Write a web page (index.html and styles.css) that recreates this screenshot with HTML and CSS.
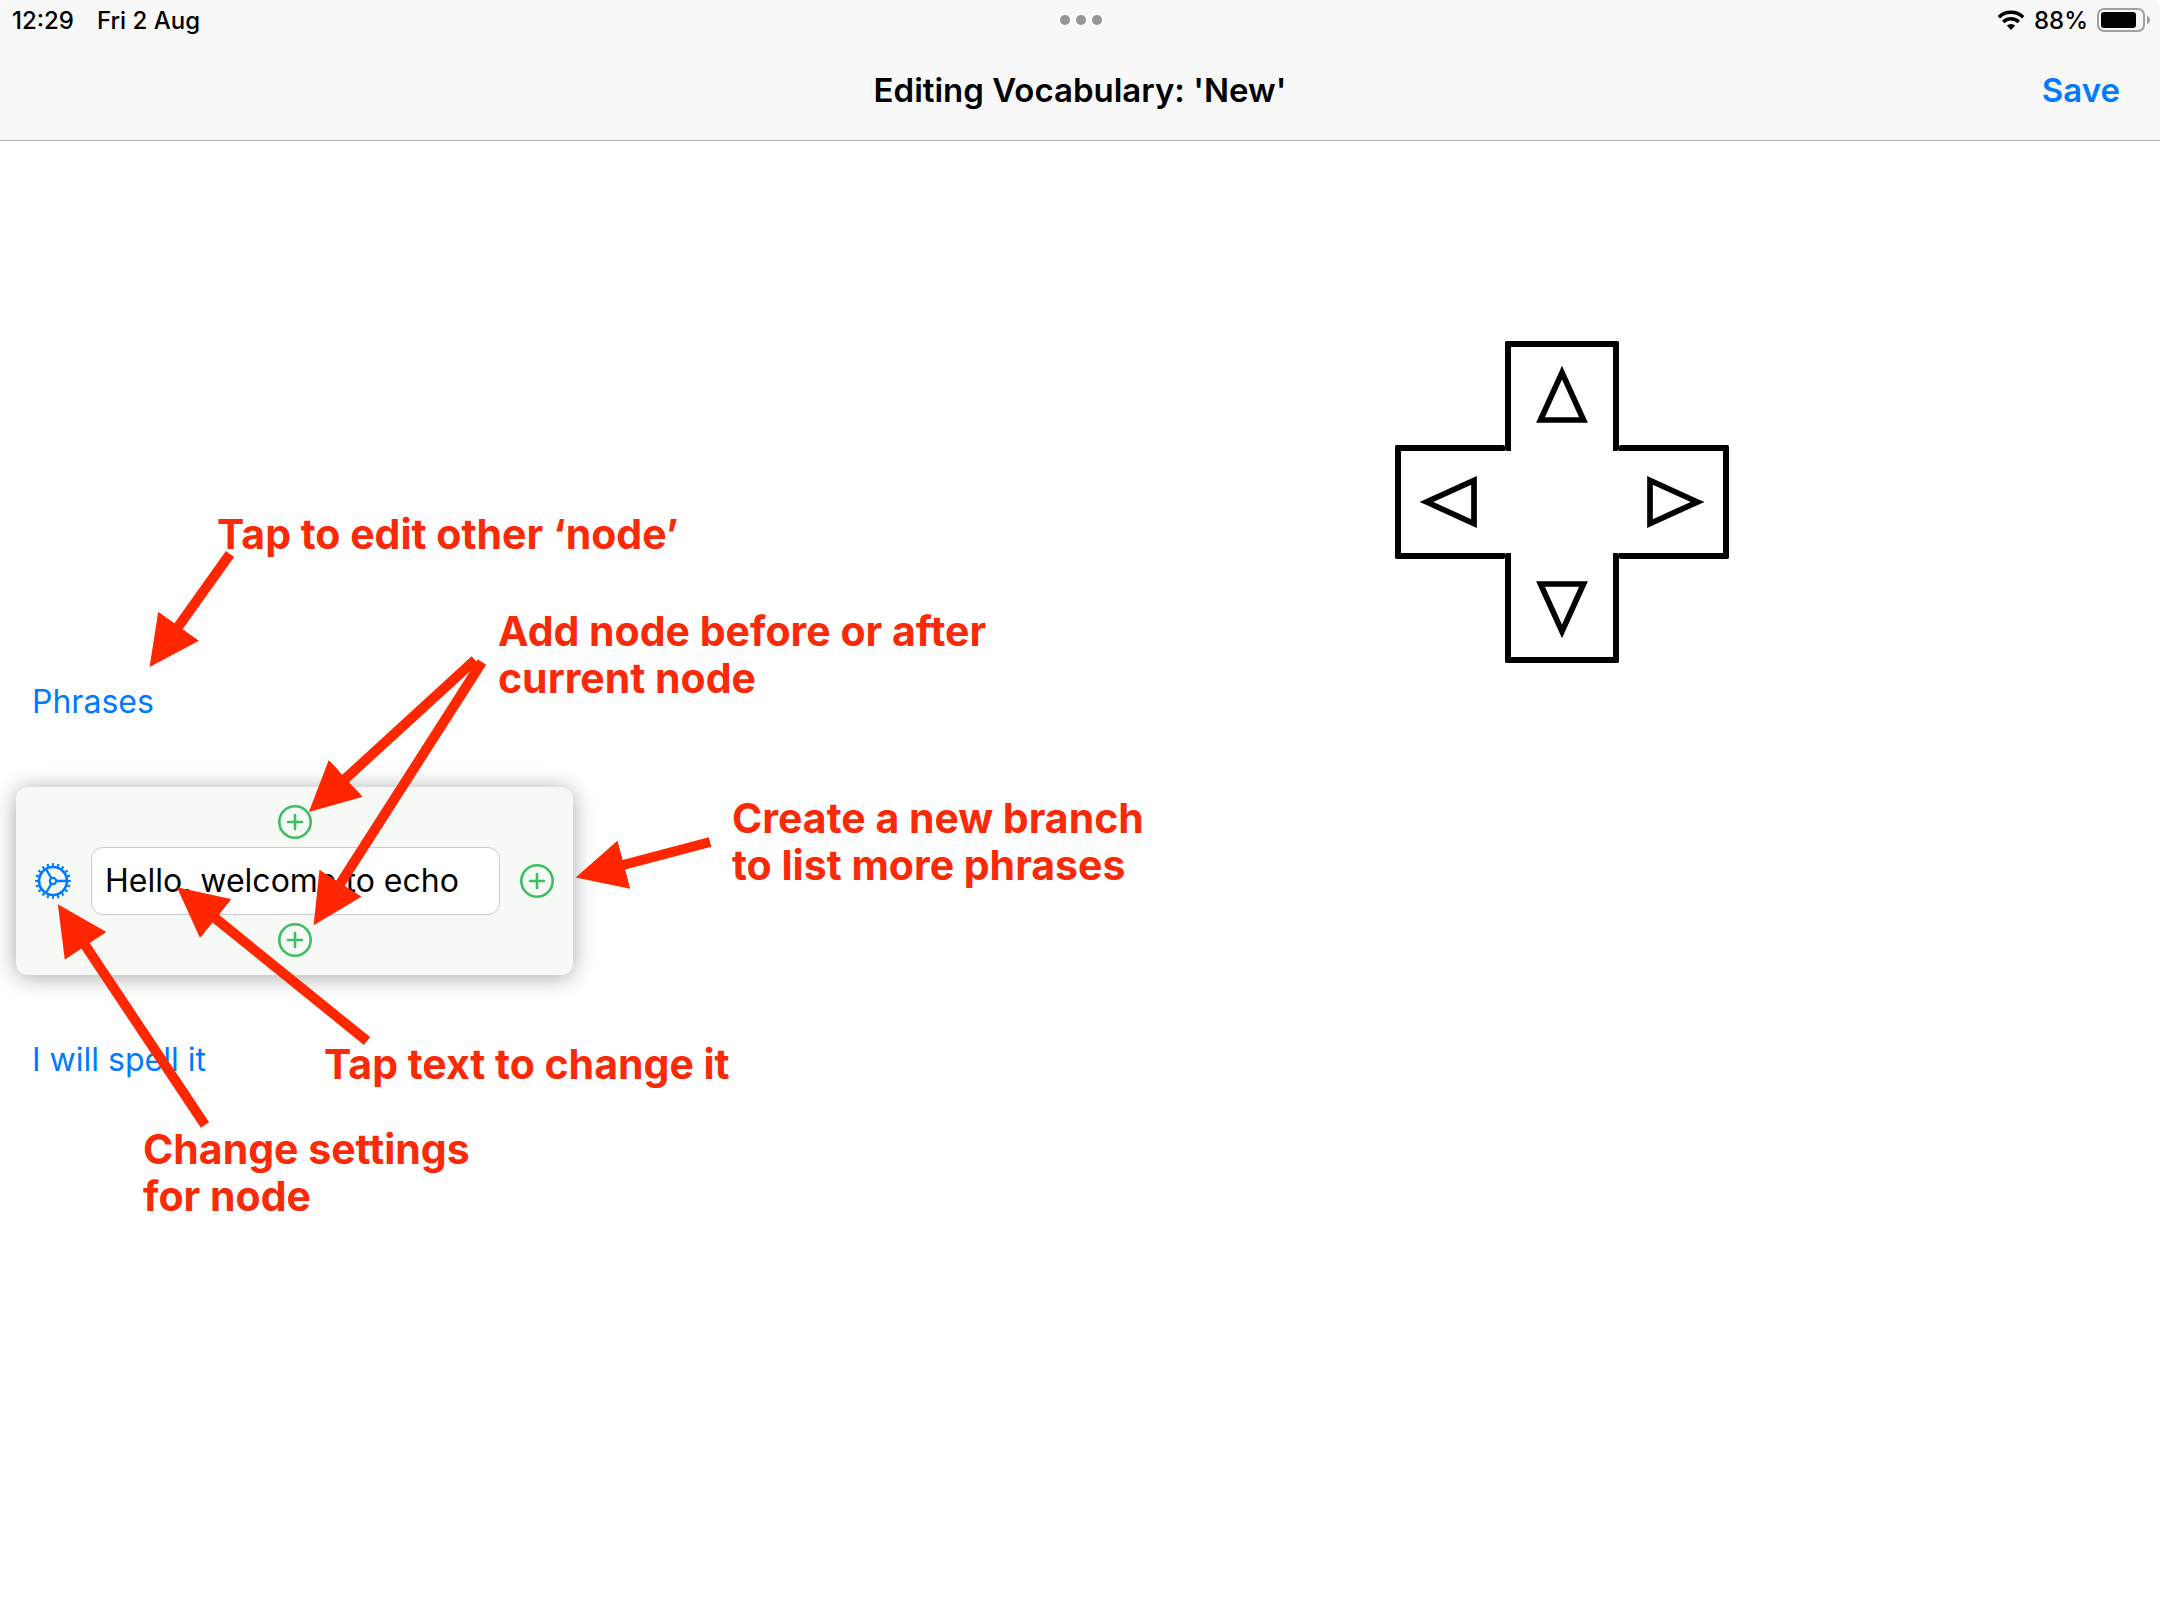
FILE: index.html
```html
<!DOCTYPE html>
<html lang="en">
<head>
<meta charset="utf-8">
<meta name="viewport" content="width=device-width, initial-scale=1">
<title>Editing Vocabulary</title>
<link rel="stylesheet" href="styles.css">
</head>
<body>
<svg class="defs" aria-hidden="true">
  <symbol id="plus" viewBox="0 0 34 34">
    <circle cx="17" cy="17" r="15.7" fill="none" stroke="currentColor" stroke-width="2.6"/>
    <path d="M17 10v14M10 17h14" fill="none" stroke="currentColor" stroke-width="2.6" stroke-linecap="round"/>
  </symbol>
  <symbol id="triangle" viewBox="0 0 52 58">
    <path d="M26 6.600 4.500 54h43z" fill="none" stroke="currentColor" stroke-width="5.700"/>
  </symbol>
</svg>

<header class="header">
  <div class="status">
    <div class="status-group status-left"><span>12:29</span><span>Fri 2 Aug</span></div>
    <svg class="dots" viewBox="0 0 42 10" aria-hidden="true"><circle cx="5" cy="5" r="5"/><circle cx="21" cy="5" r="5"/><circle cx="37" cy="5" r="5"/></svg>
    <div class="status-group status-right">
      <svg class="wifi" viewBox="0 0 28 20" aria-hidden="true">
        <path d="M1.800 7.200a17.500 17.500 0 0 1 24.400 0M6.200 12a11 11 0 0 1 15.600 0" fill="none" stroke="#000" stroke-width="3.400"/>
        <path d="M14 20l-4.200-4.400a6 6 0 0 1 8.400 0z"/>
      </svg>
      <span>88%</span>
      <svg class="battery" viewBox="0 0 53 24" aria-hidden="true">
        <rect x="1" y="1" width="46" height="22" rx="6" fill="none" stroke="#a0a0a0" stroke-width="2"/>
        <rect x="4" y="4" width="35" height="16" rx="3"/>
        <path d="M50 8c4 1 4 7 0 8z" fill="#a0a0a0"/>
      </svg>
    </div>
  </div>
  <div class="nav">
    <h1 class="title">Editing Vocabulary: 'New'</h1>
    <button class="save" type="button">Save</button>
  </div>
</header>

<main class="editor">
  <section class="nodes">
    <a class="node-link" href="#phrases">Phrases</a>
    <div class="card">
      <button class="icon add" type="button" aria-label="Add node before"><svg><use href="#plus"/></svg></button>
      <div class="card-row">
        <button class="icon gear" type="button" aria-label="Node settings">
          <svg viewBox="0 0 36 36" fill="none" stroke="currentColor">
            <circle cx="18" cy="18" r="14" stroke-width="2.700"/>
            <circle cx="18" cy="18" r="16.400" stroke-width="3" pathLength="40" stroke-dasharray="0.800 1.200" stroke-dashoffset="0.400"/>
            <circle cx="18" cy="18" r="3.200" stroke-width="2.200"/>
            <path d="M21.500 18H31M16.200 15 11 6M16.200 21 11 30" stroke-width="2.400"/>
          </svg>
        </button>
        <input class="phrase" type="text" aria-label="Phrase" value="Hello, welcome to echo">
        <button class="icon add" type="button" aria-label="Add branch"><svg><use href="#plus"/></svg></button>
      </div>
      <button class="icon add" type="button" aria-label="Add node after"><svg><use href="#plus"/></svg></button>
    </div>
    <a class="node-link" href="#spell">I will spell it</a>
  </section>

  <section class="pad-area">
    <div class="pad">
      <button class="key up" type="button" aria-label="Up"><svg><use href="#triangle"/></svg></button>
      <button class="key left" type="button" aria-label="Left"><svg><use href="#triangle"/></svg></button>
      <button class="key right" type="button" aria-label="Right"><svg><use href="#triangle"/></svg></button>
      <button class="key down" type="button" aria-label="Down"><svg><use href="#triangle"/></svg></button>
    </div>
  </section>
</main>

<div class="notes">
  <svg class="arrows" viewBox="0 0 1200 1300" aria-hidden="true">
    <defs>
      <marker id="head" markerUnits="userSpaceOnUse" markerWidth="50" markerHeight="50" refX="1" refY="25" orient="auto"><path d="M0 0 50 25 0 50z" fill="#ff2600"/></marker>
    </defs>
    <g stroke="#ff2600" stroke-width="10">
      <path d="M230 554 178 627" marker-end="url(#head)"/>
      <path d="M475 660 345 779" marker-end="url(#head)"/>
      <path d="M482 662 340 884" marker-end="url(#head)"/>
      <path d="M710 842 623 865" marker-end="url(#head)"/>
      <path d="M367 1041 215 918" marker-end="url(#head)"/>
      <path d="M205 1125 85 945" marker-end="url(#head)"/>
    </g>
  </svg>
  <p class="note note-other">Tap to edit other ‘node’</p>
  <p class="note note-add">Add node before or after<br>current node</p>
  <p class="note note-branch">Create a new branch<br>to list more phrases</p>
  <p class="note note-text">Tap text to change it</p>
  <p class="note note-settings">Change settings<br>for node</p>
</div>
</body>
</html>
```
FILE: styles.css
```css
* { box-sizing: border-box; }

body {
  margin: 0;
  min-height: 100vh;
  display: flex;
  flex-direction: column;
  position: relative;
  background: #fff;
  color: #000;
  font-family: Inter, "Liberation Sans", sans-serif;
  font-size: 32px;
}

button {
  padding: 0;
  border: 0;
  background: none;
  color: inherit;
  font: inherit;
}

svg { display: block; }

.defs { position: absolute; width: 0; height: 0; }

.header {
  background: #f8f8f8;
  border-bottom: 1px solid #b2b2b2;
  border-radius: 8px 8px 0 0;
}

.status,
.nav {
  display: grid;
  grid-template-columns: 1fr auto 1fr;
  align-items: center;
}

.status {
  height: 40px;
  padding: 0 10px 0 12px;
  font-size: 24px;
  font-weight: 500;
}

.status-group { display: flex; align-items: center; }
.status-left { gap: 23px; }
.status-right { justify-content: flex-end; gap: 9px; }
.dots { width: 42px; height: 10px; fill: #969696; }
.wifi { width: 28px; height: 20px; }
.battery { width: 53px; height: 24px; }

.nav { height: 100px; padding: 0 40px; }

.title {
  grid-column: 2;
  margin: 0;
  font-size: 33px;
  font-weight: 600;
}

.save {
  justify-self: end;
  color: #007aff;
  font-size: 33px;
  font-weight: 600;
}

.editor {
  flex: 1;
  display: grid;
  grid-template-columns: 893fr 1107fr;
}

.nodes {
  display: flex;
  flex-direction: column;
  justify-content: center;
  align-items: flex-start;
  gap: 64px;
  padding: 0 16px;
}

.node-link {
  padding: 0 16px;
  color: #007aff;
  line-height: 42px;
  text-decoration: none;
}

.card {
  display: flex;
  flex-direction: column;
  align-items: center;
  gap: 8px;
  width: 557px;
  padding: 18px 19px;
  border-radius: 12px;
  background: #f7f9f7;
  box-shadow: 0 2px 22px rgba(0, 0, 0, 0.35);
}

.card-row {
  display: flex;
  align-items: center;
  gap: 20px;
  width: 100%;
}

.icon { flex: none; width: 34px; height: 34px; }
.icon svg { width: 100%; height: 100%; }
.add { color: #3dbf61; }
.gear { width: 36px; height: 36px; color: #007aff; }

.phrase {
  flex: 1;
  min-width: 0;
  height: 68px;
  padding: 0 13px;
  border: 1px solid #c8cccc;
  border-radius: 12px;
  background: #fff;
  color: #000;
  font: inherit;
}

.pad-area {
  display: flex;
  justify-content: center;
  align-items: flex-start;
  padding-top: 200px;
}

.pad {
  display: grid;
  grid-template-columns: 110px 114px 110px;
  grid-template-rows: 104px 114px 104px;
}

.key {
  display: flex;
  justify-content: center;
  align-items: center;
  border: 6px solid #000;
  border-radius: 2px;
}

.key svg { flex: none; width: 52px; height: 58px; }
.up { grid-area: 1 / 2; margin-bottom: -6px; padding-bottom: 8px; border-bottom: 0; }
.left { grid-area: 2 / 1; padding-right: 8px; border-right: 0; }
.right { grid-area: 2 / 3; padding-left: 8px; border-left: 0; }
.down { grid-area: 3 / 2; margin-top: -6px; padding-top: 8px; border-top: 0; }
.left svg { transform: rotate(-90deg); }
.right svg { transform: rotate(90deg); }
.down svg { transform: rotate(180deg); }

/* Help callouts laid over the editor */
.notes {
  position: absolute;
  top: 0;
  left: 0;
  pointer-events: none;
}

.arrows { width: 1200px; height: 1300px; }

.note {
  position: absolute;
  margin: 0;
  color: #fa2a08;
  font-size: 41px;
  font-weight: 700;
  line-height: 47px;
  white-space: nowrap;
}

.note-other { left: 217px; top: 511px; }
.note-add { left: 498px; top: 608px; }
.note-branch { left: 732px; top: 795px; }
.note-text { left: 324px; top: 1041px; }
.note-settings { left: 143px; top: 1126px; }
```
